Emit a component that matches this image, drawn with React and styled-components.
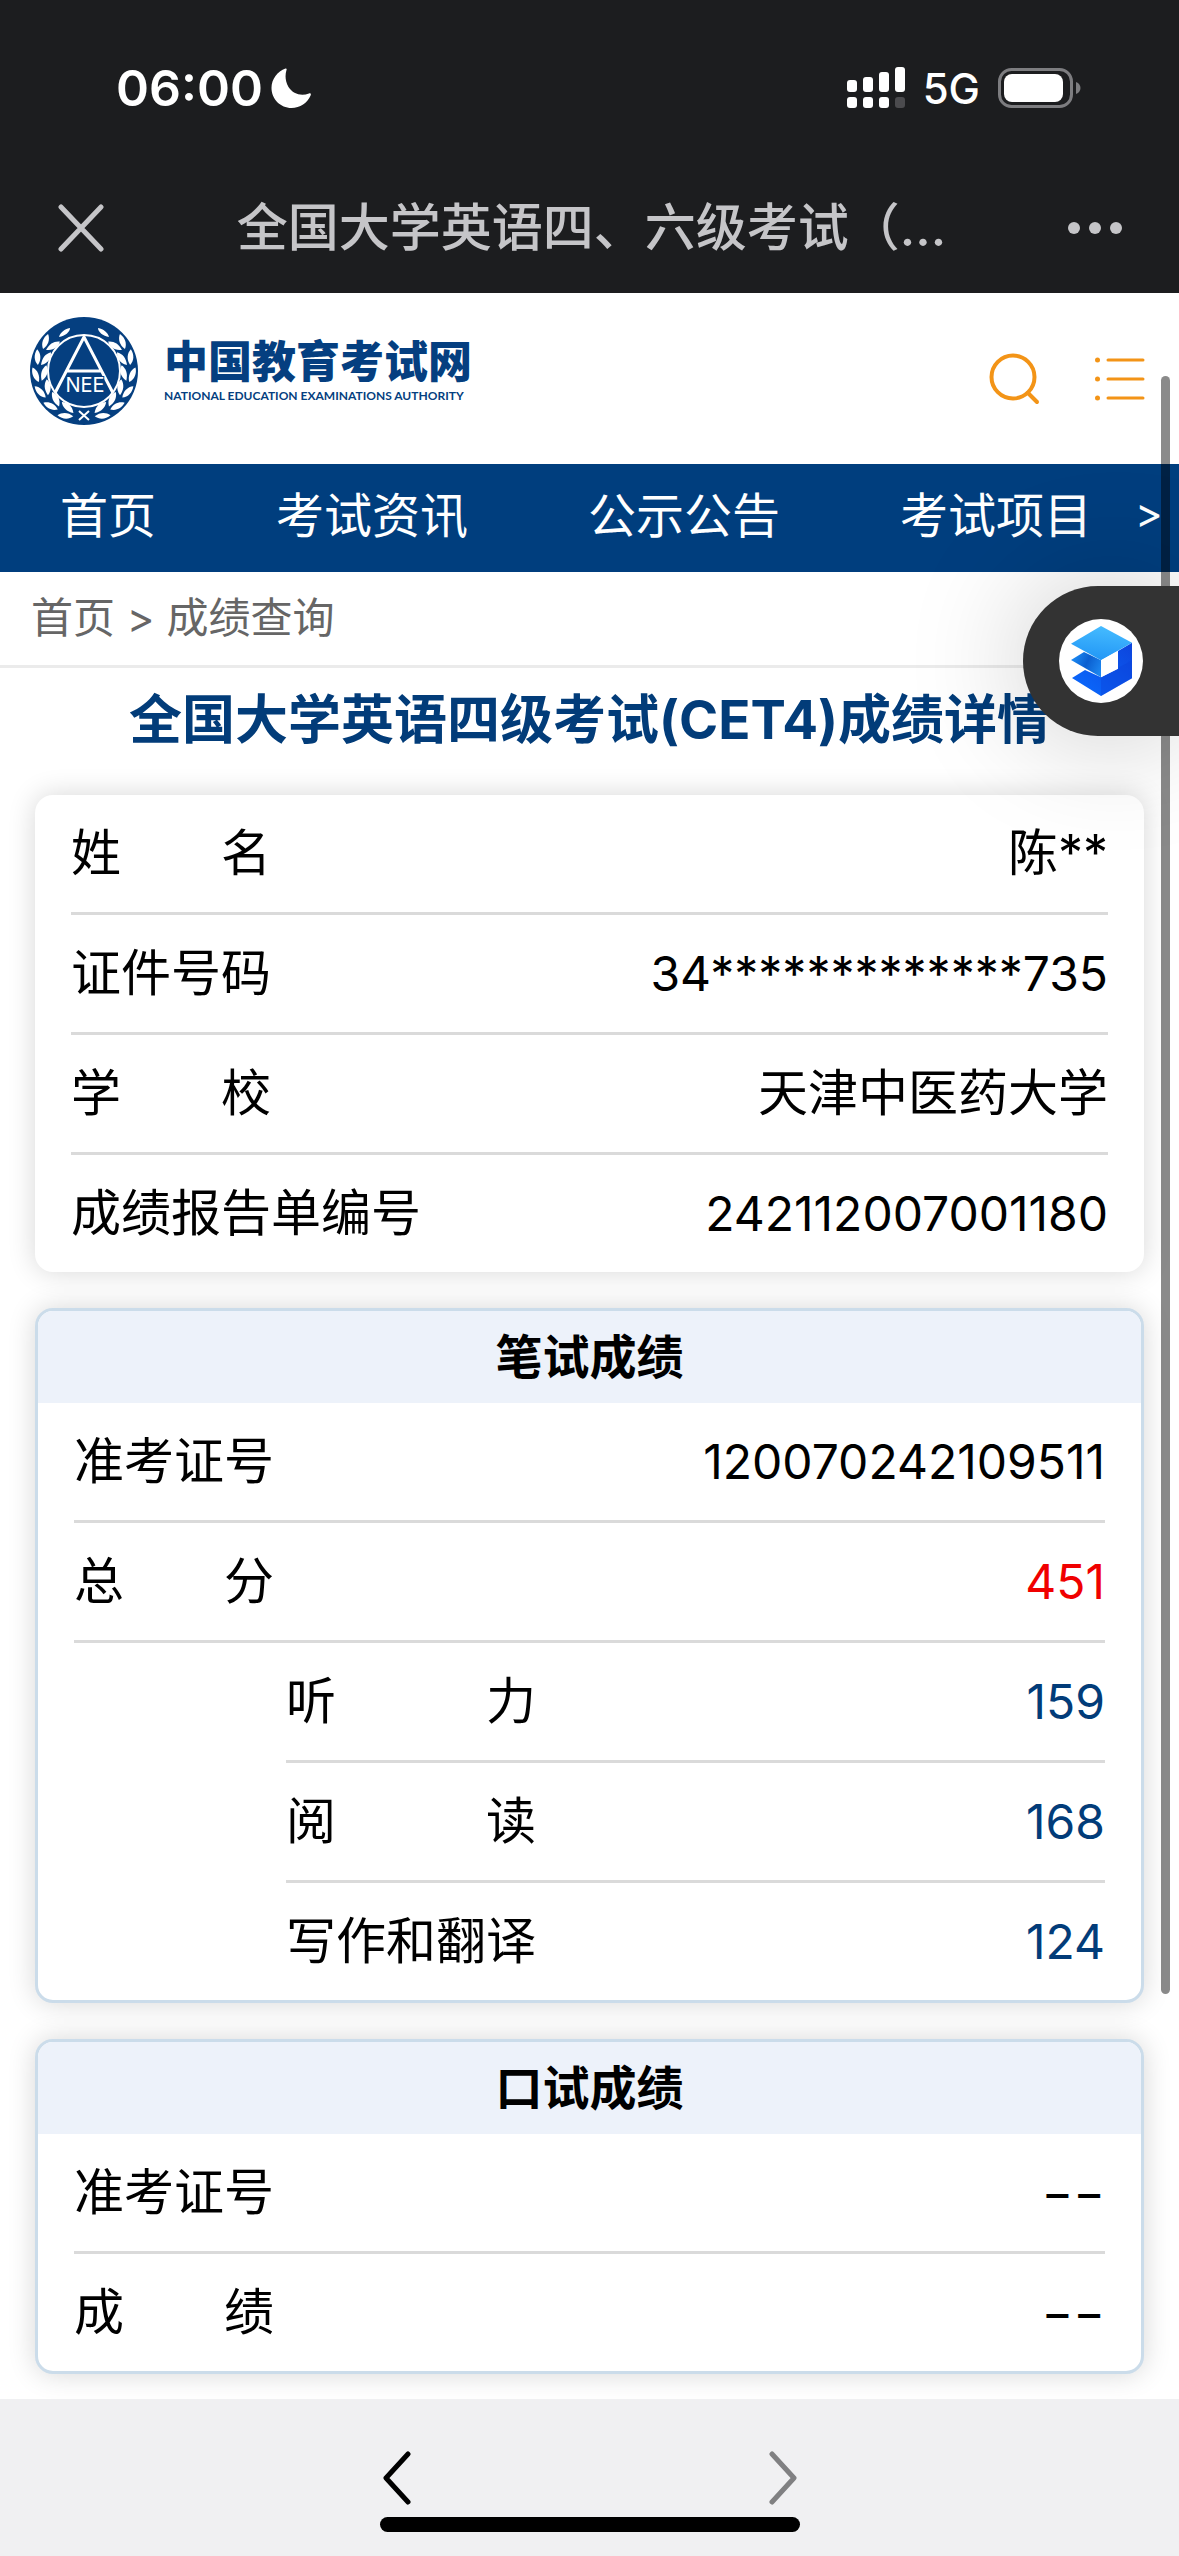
import React from 'react';
import styled, { createGlobalStyle } from 'styled-components';

const LEAF_ANGLES = [22, 43, 64, 85, 106, 127];

const personal = [
  { label: '姓　　名', value: '陈**' },
  { label: '证件号码', value: '34*************735', numeric: true },
  { label: '学　　校', value: '天津中医药大学' },
  { label: '成绩报告单编号', value: '242112007001180', numeric: true },
];

const written = [
  { label: '准考证号', value: '120070242109511', numeric: true },
  { label: '总　　分', value: '451', color: '#f00000', numeric: true },
  { label: '听　　　力', value: '159', color: '#023c79', numeric: true, sub: true },
  { label: '阅　　　读', value: '168', color: '#023c79', numeric: true, sub: true },
  { label: '写作和翻译', value: '124', color: '#023c79', numeric: true, sub: true },
];

const oral = [
  { label: '准考证号', value: '−−', numeric: true },
  { label: '成　　绩', value: '−−', numeric: true },
];

const MoonIcon = () => (
  <svg width="40" height="40" viewBox="0 0 40 40" fill="#fff" aria-hidden="true">
    <path d="M14.500 0.500C15.500 0.200 16 1 15.500 2C14 7 14 13 17.500 19C22 26 30 28.500 38 25.500C39.500 25 40.200 26 39.700 27.300C36.500 35 29 40 20.500 40C9.500 40 0.500 31 0.500 20C0.500 11 6.500 3.500 14.500 0.500Z" />
  </svg>
);

const SignalIcon = () => (
  <svg width="58" height="42" viewBox="0 0 58 42" fill="#fff" aria-hidden="true">
    <rect x="0" y="13" width="10" height="12" rx="3" />
    <rect x="16" y="10" width="10" height="15" rx="3" />
    <rect x="32" y="5" width="10" height="20" rx="3" />
    <rect x="48" y="0" width="10" height="25" rx="3" />
    <rect x="0" y="30" width="10" height="11" rx="3" />
    <rect x="16" y="30" width="10" height="11" rx="3" />
    <rect x="32" y="30" width="10" height="11" rx="3" />
    <rect x="48" y="30" width="10" height="11" rx="3" fill="#4b4b4e" />
  </svg>
);

const BatteryIcon = () => (
  <svg width="83" height="40" viewBox="0 0 83 40" aria-hidden="true">
    <rect x="1.500" y="1.500" width="72" height="37" rx="12" fill="none" stroke="#7d7d80" strokeWidth="3" />
    <rect x="6" y="6" width="59" height="28" rx="8" fill="#fff" />
    <path d="M78 14C81 15 82.500 17.500 82.500 20C82.500 22.500 81 25 78 26Z" fill="#7d7d80" />
  </svg>
);

const SearchIcon = () => (
  <svg width="52" height="52" viewBox="0 0 52 52" fill="none" stroke="#f39417" strokeWidth="4" strokeLinecap="round" aria-hidden="true">
    <circle cx="24" cy="24" r="21.500" />
    <path d="M39 40L48 49" />
  </svg>
);

const ListIcon = () => (
  <svg width="50" height="44" viewBox="0 0 50 44" aria-hidden="true">
    {[3, 22, 41].map((y) => (
      <g key={y} stroke="#f39417" strokeLinecap="round">
        <path d={`M2.500 ${y}v0.010`} strokeWidth="5" />
        <path d={`M13 ${y}H48`} strokeWidth="3" />
      </g>
    ))}
  </svg>
);

// one side of the laurel, leaves fan out along the ring
const Branch = () => (
  <g fill="#fff">
    {LEAF_ANGLES.map((a) => (
      <g key={a} transform={`rotate(${a} 54 54)`}>
        <path d="M60 97C56 90 50 89 45 91C48 96 53 98 60 97Z" />
        <path d="M61 100C55 98 49 100 46 105C52 107 58 105 61 100Z" />
      </g>
    ))}
    <path d="M40 11C40 15 35 19 29 20C30 16 34 12 40 11Z" />
  </g>
);

const Emblem = () => (
  <svg width="108" height="108" viewBox="0 0 108 108" aria-hidden="true">
    <circle cx="54" cy="54" r="54" fill="#053f80" />
    <Branch />
    <g transform="matrix(-1 0 0 1 108 0)">
      <Branch />
    </g>
    <path d="M49 103L59 94M59 103L49 94" stroke="#fff" strokeWidth="2" />
    <circle cx="54" cy="54" r="36" fill="#053f80" stroke="#fff" strokeWidth="2" />
    <path d="M25 76L54 20L83 76M37 54H71" fill="none" stroke="#fff" strokeWidth="3" />
    <text x="55" y="75" textAnchor="middle" fill="#fff" stroke="#053f80" strokeWidth="2" paintOrder="stroke" fontFamily="Inter, sans-serif" fontSize="20">NEE</text>
  </svg>
);

const CubeIcon = () => (
  <svg width="84" height="84" viewBox="0 0 252 252" aria-hidden="true">
    <defs>
      <linearGradient id="top" x1="0.600" y1="0" x2="0.400" y2="1">
        <stop offset="0" stopColor="#46bcff" />
        <stop offset="1" stopColor="#2196f6" />
      </linearGradient>
      <linearGradient id="mid" x1="0" y1="0.300" x2="1" y2="0.700">
        <stop offset="0" stopColor="#1c8cf5" />
        <stop offset="0.500" stopColor="#0b5fd0" />
        <stop offset="1" stopColor="#1c86f0" />
      </linearGradient>
      <linearGradient id="side" x1="0" y1="1" x2="1" y2="0">
        <stop offset="0" stopColor="#0a6cff" />
        <stop offset="1" stopColor="#0d44dc" />
      </linearGradient>
    </defs>
    <circle cx="126" cy="126" r="126" fill="#fff" />
    <path d="M39 177L78 153L126 175L177 149V96L219 71V178L126 231Z" fill="url(#side)" />
    <path d="M126 175L219 124V178L126 231Z" fill="#0b40d8" fillOpacity="0.350" />
    <path d="M36 123L75 99L126 124V175Z" fill="url(#mid)" />
    <path d="M36 74L126 21L219 71L126 124Z" fill="url(#top)" />
    <path d="M126 124L177 96V149L126 175Z" fill="#fff" />
  </svg>
);

const ScoreCard = ({ title, rows }) => (
  <Card $bordered={Boolean(title)}>
    {title && <CardTitle>{title}</CardTitle>}
    <Rows>
      {rows.map((row) => (
        <Row key={row.label} $sub={row.sub}>
          <dt>{row.label}</dt>
          <Value $color={row.color} $numeric={row.numeric}>{row.value}</Value>
        </Row>
      ))}
    </Rows>
  </Card>
);

const App = () => {
  return (
    <Page>
      <GlobalStyle />
      <StatusBar>
        <Clock>
          06:00 <MoonIcon />
        </Clock>
        <Indicators>
          <SignalIcon />
          5G
          <BatteryIcon />
        </Indicators>
      </StatusBar>
      <TitleBar>
        <IconButton aria-label="关闭">
          <svg width="46" height="48" viewBox="0 0 46 48" stroke="#c5c5c8" strokeWidth="5" strokeLinecap="round">
            <path d="M3 3L43 45M43 3L3 45" />
          </svg>
        </IconButton>
        <PageName>全国大学英语四、六级考试（...</PageName>
        <IconButton aria-label="更多">
          <svg width="56" height="14" viewBox="0 0 56 14" fill="#c5c5c8">
            <circle cx="7" cy="7" r="6" />
            <circle cx="28" cy="7" r="6" />
            <circle cx="49" cy="7" r="6" />
          </svg>
        </IconButton>
      </TitleBar>
      <SiteHeader>
        <Brand href="#">
          <Emblem />
          <BrandText>
            <BrandName>中国教育考试网</BrandName>
            <BrandSub>NATIONAL EDUCATION EXAMINATIONS AUTHORITY</BrandSub>
          </BrandText>
        </Brand>
        <Tools>
          <IconButton aria-label="搜索"><SearchIcon /></IconButton>
          <IconButton aria-label="菜单"><ListIcon /></IconButton>
        </Tools>
      </SiteHeader>
      <Nav>
        <NavList>
          <NavLink href="#">首页</NavLink>
          <NavLink href="#">考试资讯</NavLink>
          <NavLink href="#">公示公告</NavLink>
          <NavLink href="#">考试项目</NavLink>
        </NavList>
        <NavMore>&gt;</NavMore>
      </Nav>
      <Breadcrumb>
        <a href="#">首页</a> &gt; <a href="#">成绩查询</a>
      </Breadcrumb>
      <Main>
        <Heading>全国大学英语四级考试(CET4)成绩详情</Heading>
        <ScoreCard rows={personal} />
        <ScoreCard title="笔试成绩" rows={written} />
        <ScoreCard title="口试成绩" rows={oral} />
      </Main>
      <BottomBar>
        <BottomButtons>
          <IconButton aria-label="后退">
            <svg width="30" height="54" viewBox="0 0 30 54" fill="none" stroke="#000" strokeWidth="5" strokeLinecap="round" strokeLinejoin="round">
              <path d="M26 3L4 27L26 51" />
            </svg>
          </IconButton>
          <IconButton aria-label="前进">
            <svg width="30" height="54" viewBox="0 0 30 54" fill="none" stroke="#808082" strokeWidth="5" strokeLinecap="round" strokeLinejoin="round">
              <path d="M4 3L26 27L4 51" />
            </svg>
          </IconButton>
        </BottomButtons>
        <HomeIndicator />
      </BottomBar>
      <ScrollThumb />
      <FloatButton aria-label="小程序">
        <CubeIcon />
      </FloatButton>
    </Page>
  );
};

const GlobalStyle = createGlobalStyle`
  * {
    box-sizing: border-box;
  }

  body {
    margin: 0;
    background: #fff;
    font-family: Inter, "Noto Sans CJK SC", sans-serif;
  }

  a {
    color: inherit;
    text-decoration: none;
  }

  svg {
    display: block;
  }
`;

const Page = styled.div`
  position: relative;
  display: flex;
  flex-direction: column;
  min-height: 100vh;
  overflow: hidden;
`;

const StatusBar = styled.div`
  display: flex;
  justify-content: space-between;
  align-items: center;
  height: 176px;
  padding: 0 98px 0 116px;
  background: #1c1d1f;
  color: #fff;
`;

const Clock = styled.div`
  display: flex;
  align-items: center;
  gap: 8px;
  font-size: 50px;
  font-weight: 600;
`;

const Indicators = styled.div`
  display: flex;
  align-items: center;
  gap: 18px;
  font-size: 42px;
  font-weight: 500;
`;

const TitleBar = styled.div`
  display: flex;
  justify-content: space-between;
  align-items: center;
  height: 117px;
  padding: 0 56px 14px 58px;
  background: #1c1d1f;
  color: #c5c5c8;
`;

const PageName = styled.div`
  padding-left: 12px;
  font-size: 51px;
  font-weight: 500;
  line-height: 60px;
  white-space: nowrap;
`;

const IconButton = styled.button`
  padding: 0;
  border: 0;
  background: none;
  cursor: pointer;
`;

const SiteHeader = styled.header`
  display: flex;
  justify-content: space-between;
  height: 171px;
  padding: 24px 34px 0 30px;
  background: #fff;
`;

const Brand = styled.a`
  display: flex;
  align-items: flex-start;
  gap: 26px;
`;

const BrandText = styled.div`
  display: flex;
  flex-direction: column;
  padding-top: 20px;
  color: #053f80;
`;

const BrandName = styled.span`
  font-size: 44px;
  font-weight: 900;
  line-height: 50px;
`;

const BrandSub = styled.span`
  font-family: Lato, sans-serif;
  font-size: 12px;
  font-weight: 700;
  line-height: 18px;
  white-space: nowrap;
`;

const Tools = styled.div`
  display: flex;
  align-items: center;
  gap: 54px;
  height: 124px;
`;

const Nav = styled.nav`
  display: flex;
  align-items: center;
  height: 108px;
  padding-bottom: 4px;
  background: #003e7e;
  color: #fff;
`;

const NavList = styled.div`
  display: flex;
  flex: 1;
  min-width: 0;
  overflow: hidden;
`;

const NavLink = styled.a`
  flex: none;
  padding: 0 60px;
  font-size: 48px;
  line-height: 104px;

  &:last-child {
    padding-right: 0;
  }
`;

const NavMore = styled.button`
  width: 44px;
  padding: 0 0 8px;
  border: 0;
  background: none;
  color: #fff;
  font-family: inherit;
  font-size: 42px;
  font-weight: 400;
  text-align: left;
`;

const Breadcrumb = styled.div`
  height: 96px;
  padding-left: 31px;
  border-bottom: 3px solid #ebebeb;
  color: #666;
  font-size: 42px;
  line-height: 92px;
`;

const Main = styled.main`
  display: flex;
  flex: 1;
  flex-direction: column;
  gap: 36px;
  padding: 0 35px 20px;
`;

const Heading = styled.h1`
  margin: 0 0 -14px;
  color: #023c79;
  font-size: 53px;
  font-weight: 700;
  line-height: 105px;
  text-align: center;
  white-space: nowrap;
`;

const Card = styled.section`
  overflow: hidden;
  border: ${(p) => (p.$bordered ? '3px solid #cbdcea' : '0')};
  border-radius: 18px;
  background: #fff;
  box-shadow: 0 0 28px rgba(0, 0, 0, 0.16);
`;

const CardTitle = styled.h2`
  margin: 0;
  background: #edf2fa;
  color: #000;
  font-size: 47px;
  font-weight: 700;
  line-height: 92px;
  text-align: center;
`;

const Rows = styled.dl`
  margin: 0;
  padding: 0 36px;
`;

const Row = styled.div`
  display: flex;
  justify-content: space-between;
  margin-left: ${(p) => (p.$sub ? '212px' : '0')};
  border-bottom: 3px solid #dadada;
  color: #000;
  font-size: 50px;
  line-height: 117px;

  &:last-child {
    border-bottom: 0;
  }
`;

const Value = styled.dd`
  margin: 0;
  color: ${(p) => p.$color || '#000'};
  font-size: ${(p) => (p.$numeric ? '48px' : '50px')};
`;

const BottomBar = styled.footer`
  display: flex;
  flex-direction: column;
  align-items: center;
  height: 157px;
  padding-top: 52px;
  background: #f0f0f2;
`;

const BottomButtons = styled.div`
  display: flex;
  justify-content: space-between;
  width: 416px;
`;

const HomeIndicator = styled.div`
  width: 420px;
  height: 15px;
  margin-top: 12px;
  border-radius: 8px;
  background: #000;
`;

const ScrollThumb = styled.div`
  position: absolute;
  top: 376px;
  right: 9px;
  width: 9px;
  height: 1618px;
  border-radius: 5px;
  background: rgba(0, 0, 0, 0.46);
`;

const FloatButton = styled.button`
  position: absolute;
  top: 586px;
  right: 0;
  display: flex;
  align-items: center;
  width: 156px;
  height: 150px;
  padding: 0 0 0 36px;
  border: 0;
  border-radius: 75px 0 0 75px;
  background: #333;
  box-shadow: 0 0 120px rgba(0, 0, 0, 0.22);
`;

export default App;
